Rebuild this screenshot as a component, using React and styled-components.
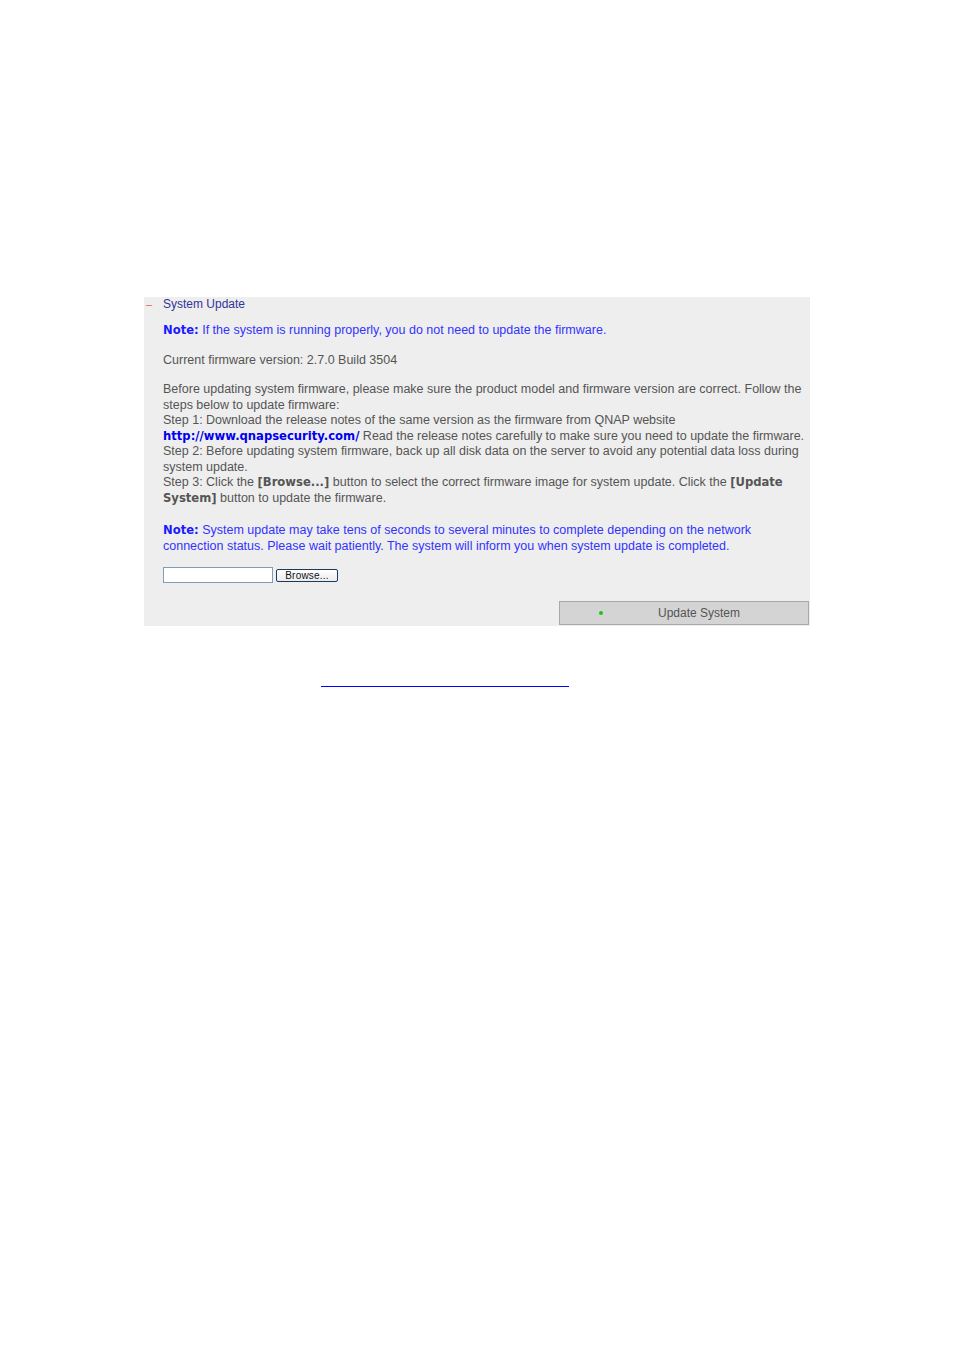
import React from "react";
import styled, { createGlobalStyle } from "styled-components";

const Global = createGlobalStyle`
  html, body { margin: 0; padding: 0; background: #ffffff; }
  body { font-family: "Liberation Sans", Arial, sans-serif; }
`;

const Page = styled.div`
  width: 954px;
  height: 1350px;
  padding-top: 297px;
  box-sizing: border-box;
`;

const Panel = styled.section`
  margin-left: 144px;
  width: 666px;
  height: 329px;
  background: #eeeeee;
  box-sizing: border-box;
  padding: 0 0 0 19px;
  display: flex;
  flex-direction: column;
  position: relative;
`;

const TitleRow = styled.div`
  display: flex;
  align-items: center;
  height: 14px;
  font-size: 12px;
  color: #333399;
  line-height: 14px;
`;

const Collapse = styled.span`
  position: absolute;
  left: 2px;
  top: 0;
  color: #e06060;
  font-size: 11px;
  line-height: 14px;
`;

const Text = styled.p`
  margin: ${(p) => p.$mt || 0}px 0 0 0;
  font-size: 12.5px;
  line-height: 15.5px;
  color: ${(p) => (p.$blue ? "#3333ff" : "#555555")};
  white-space: nowrap;
`;

const Bold = styled.b`
  font-family: "DejaVu Sans", Verdana, sans-serif;
  font-size: 11.6px;
  font-weight: bold;
  color: ${(p) => (p.$link ? "#0000ee" : p.$blue ? "#1a1aff" : "#555555")};
`;

const FileRow = styled.div`
  display: flex;
  align-items: center;
  gap: 3px;
  margin-top: 13px;
`;

const FileInput = styled.div`
  width: 108px;
  height: 14px;
  background: #ffffff;
  border: 1px solid #7f9db9;
`;

const BrowseButton = styled.div`
  width: 60px;
  height: 11px;
  border: 1px solid #1c3a5a;
  border-radius: 2px;
  background: linear-gradient(#ffffff, #ececec);
  font-size: 10px;
  line-height: 11px;
  text-align: center;
  color: #111111;
  letter-spacing: 0.2px;
`;

const Footer = styled.div`
  margin-top: auto;
  display: flex;
  justify-content: flex-end;
  margin-right: 1px;
  margin-bottom: 1px;
`;

const UpdateButton = styled.div`
  width: 248px;
  height: 22px;
  background: #d4d4d4;
  border: 1px solid #a8a8a8;
  display: flex;
  align-items: center;
  font-size: 12px;
  color: #555555;
`;

const Dot = styled.span`
  width: 4px;
  height: 4px;
  border-radius: 50%;
  background: #11cc11;
  margin-left: 39px;
  margin-right: 55px;
`;

const Rule = styled.div`
  margin: 60px 0 0 321px;
  width: 248px;
  height: 1px;
  background: #0000ff;
`;

export default function App() {
  return (
    <Page>
      <Global />
      <Panel>
        <Collapse>–</Collapse>
        <TitleRow>System Update</TitleRow>
        <Text $blue $mt={12}>
          <Bold $blue>Note:</Bold> If the system is running properly, you do not need to update the firmware.
        </Text>
        <Text $mt={14}>Current firmware version: 2.7.0 Build 3504</Text>
        <Text $mt={14}>
          Before updating system firmware, please make sure the product model and firmware version are correct. Follow the
          <br />
          steps below to update firmware:
          <br />
          Step 1: Download the release notes of the same version as the firmware from QNAP website
          <br />
          <Bold $link>http://www.qnapsecurity.com/</Bold> Read the release notes carefully to make sure you need to update the firmware.
          <br />
          Step 2: Before updating system firmware, back up all disk data on the server to avoid any potential data loss during
          <br />
          system update.
          <br />
          Step 3: Click the <Bold>[Browse...]</Bold> button to select the correct firmware image for system update. Click the <Bold>[Update</Bold>
          <br />
          <Bold>System]</Bold> button to update the firmware.
        </Text>
        <Text $blue $mt={17}>
          <Bold $blue>Note:</Bold> System update may take tens of seconds to several minutes to complete depending on the network
          <br />
          connection status. Please wait patiently. The system will inform you when system update is completed.
        </Text>
        <FileRow>
          <FileInput />
          <BrowseButton>Browse...</BrowseButton>
        </FileRow>
        <Footer>
          <UpdateButton>
            <Dot />
            Update System
          </UpdateButton>
        </Footer>
      </Panel>
      <Rule />
    </Page>
  );
}
